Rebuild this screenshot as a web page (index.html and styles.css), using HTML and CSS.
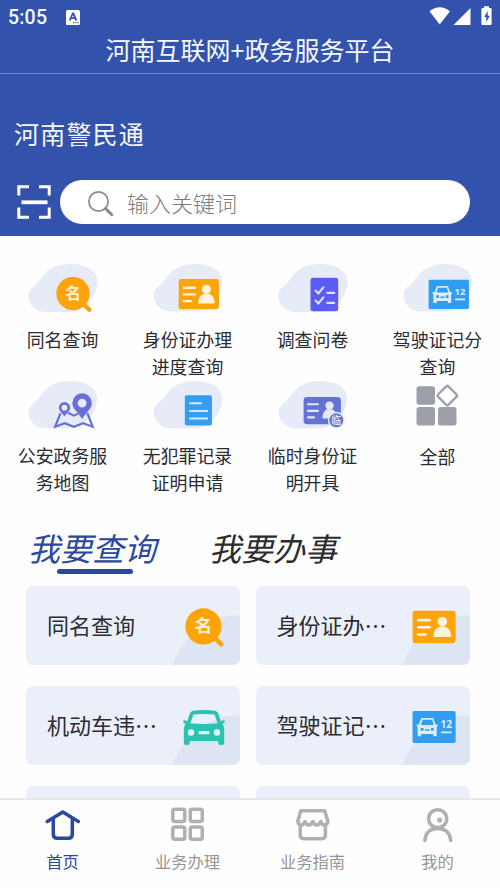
FILE: index.html
```html
<!DOCTYPE html>
<html lang="zh-CN">
<head>
<meta charset="utf-8">
<title>河南警民通</title>
<link rel="stylesheet" href="styles.css">
</head>
<body>
<svg class="sprite" aria-hidden="true">
  <symbol id="blob" viewBox="0 0 70 50">
    <path d="M.3 31C1 25 8 23 14 14 21 4 31 1 42 1c16 0 28 7 27.500 18C69 33 58 49 40 49H17C6 49-.5 39 .3 31z" fill="#e7ebf8"/>
  </symbol>
  <symbol id="name" viewBox="0 0 36 36">
    <circle cx="17" cy="17" r="16.700" fill="#fea40b"/>
    <path d="M27 27l6.300 6.300" stroke="#fea40b" stroke-width="4.400" stroke-linecap="round"/>
    <text x="17" y="22.500" class="glyph-name">名</text>
  </symbol>
  <symbol id="idcard" viewBox="0 0 41 31">
    <rect width="41" height="31" rx="3.500" fill="#fea40b"/>
    <path d="M5.500 9h11M5.500 15.700h11M5.500 22.500h7" stroke="#fff3dc" stroke-width="2.400" stroke-linecap="round"/>
    <circle cx="28.300" cy="10.500" r="4.500" fill="#fff3dc"/>
    <path d="M20 25c0-6 2.500-9 6-10h4.600c3.500 1 6 4 6 10z" fill="#fff3dc"/>
  </symbol>
  <symbol id="licence" viewBox="0 0 41 30">
    <rect width="41" height="30" rx="1.800" fill="#319df2"/>
    <path fill="#d9edff" fill-rule="evenodd" d="M8.500 6.500h11.200l2.100 6 2.200.3v1.300l-1 .6v9h-3.300v-2H8.300v2H5v-9l-1-.6v-1.300l2.200-.3zM9.700 8.200l-1.500 5h12l-1.500-5zM8 16v2.600h2.600V16zm9.600 0v2.600h2.600V16zM12 17.200v1.400h4.200v-1.400z"/>
    <text x="31.900" y="15.600" class="glyph-num">12</text>
    <path d="M27 20h10" stroke="#d9edff" stroke-width="1.700"/>
  </symbol>
  <symbol id="car" viewBox="0 0 42 36">
    <path fill="#2cc2b2" fill-rule="evenodd" d="M10 .8q11-1.600 22 0 2.500.4 3.300 2.700L37.600 11l3.200-.8q1.400.4 1 1.700-.2 1-2.300 1.800 1.700 2.400 1.700 5.300v14q0 2-2 2h-2q-2 0-2-2v-2H6.800v2q0 2-2 2h-2q-2 0-2-2V19q0-2.900 1.700-5.300-2.100-.8-2.300-1.800-.4-1.300 1-1.700l3.200.8 2.300-7.500Q7.500 1.200 10 .8zM10.500 4.500L7.400 13.300q13.600 1.600 27.200 0L31.500 4.500q-10.500-1-21 0z"/>
    <g fill="#e8f5fa"><circle cx="8" cy="22.500" r="3.200"/><circle cx="34" cy="22.500" r="3.200"/><rect x="15.500" y="21" width="11" height="3.200" rx="1.200"/></g>
  </symbol>
</svg>

<header class="header">
  <div class="status">
    <span class="clock">5:05</span>
    <svg class="app-badge" viewBox="0 0 14 15"><rect width="14" height="15" rx="1.500" fill="#fff"/><path d="M3.700 10.500L6.800 3.500h.6l3 7M5 8.200h4" fill="none" stroke="#3252ab" stroke-width="1.800"/><path d="M7 12.700h1.200m1 0h1.200m1 0h1.200" stroke="#3252ab" stroke-width="1.200"/></svg>
    <svg class="signals" viewBox="0 0 64 20"><g fill="#fff"><path d="M.5 5.200Q10.500-2.500 21 5.200L10.700 18.500z"/><path d="M41.500 2v17h-17z"/><path d="M55 .3h5v1.600h1.600q1 0 1 1V18q0 1-1 1h-8.200q-1 0-1-1V2.900q0-1 1-1H55z"/></g><path d="M58.700 5l-3.500 6h2.100v5l3.500-6.300h-2.100z" fill="#3252ab"/></svg>
  </div>
  <h1 class="title">河南互联网+政务服务平台</h1>
  <div class="brand">河南警民通</div>
  <div class="search-row">
    <svg class="scan" viewBox="0 0 34 34" fill="none" stroke="#fff" stroke-width="3"><path d="M1.800 10.500V1.800H12M22 1.800h10.200v8.700M1.800 22.500v9.700H12M22 32.200h10.200v-9.700"/><path d="M4.500 17.300h26" stroke-width="3.800"/></svg>
    <div class="search">
      <svg class="lens" viewBox="0 0 26 26" fill="none" stroke="#8b8b8b" stroke-linecap="round"><circle cx="10.500" cy="10.500" r="9.600" stroke-width="1.700"/><path d="M17.500 17.500l6.300 6.300" stroke-width="3"/></svg>
      <span>输入关键词</span>
    </div>
  </div>
</header>

<main class="main">
  <section class="services">
    <a class="service"><svg class="service-icon" viewBox="0 0 70 50"><use href="#blob"/><use href="#name" x="28" y="13.500" width="36" height="36"/></svg><span>同名查询</span></a>
    <a class="service"><svg class="service-icon" viewBox="0 0 70 50"><use href="#blob"/><use href="#idcard" x="25.300" y="16" width="41" height="31"/></svg><span>身份证办理进度查询</span></a>
    <a class="service"><svg class="service-icon" viewBox="0 0 70 50"><use href="#blob"/><rect x="32.500" y="14.800" width="27.700" height="33.400" rx="2.500" fill="#5b5cf5"/><g fill="none" stroke="#dedffc" stroke-width="2.200"><path d="M37 27l3.400 3.400 5.600-6.800M37 37l3.400 3.400 5.600-6.800"/><path d="M48.500 29.800h8.500M48.500 39.800h8.500"/></g></svg><span>调查问卷</span></a>
    <a class="service"><svg class="service-icon" viewBox="0 0 70 50"><use href="#blob"/><use href="#licence" x="25.300" y="16.700" width="41" height="30"/></svg><span>驾驶证记分查询</span></a>
    <a class="service"><svg class="service-icon" viewBox="0 0 70 50"><use href="#blob"/><path d="M32.500 33.500l-5.500 13.700 9.700-3.500 9.300 3.500 9.300-3.500 9.700 3.500-5.500-14M40 33l6 3 4-2" fill="none" stroke="#6670d8" stroke-width="2.200"/><path fill="#6670d8" fill-rule="evenodd" d="M36.500 22.300a5.700 5.700 0 0 1 5.700 5.700c0 3-2.700 4.500-5.700 8.800-3-4.300-5.700-5.800-5.700-8.800a5.700 5.700 0 0 1 5.700-5.700zm0 2.800a2.900 2.900 0 1 0 0 5.800 2.900 2.900 0 0 0 0-5.800zM54.300 13.500a9.900 9.900 0 0 1 9.900 9.900c0 5.600-5.400 8.200-9.900 16.100-4.500-7.900-9.900-10.500-9.900-16.100a9.900 9.900 0 0 1 9.900-9.900zm0 5.500a4.400 4.400 0 1 0 0 8.800 4.400 4.400 0 0 0 0-8.800z"/></svg><span>公安政务服务地图</span></a>
    <a class="service"><svg class="service-icon" viewBox="0 0 70 50"><use href="#blob"/><rect x="31.800" y="15.500" width="27.400" height="30.500" rx="2" fill="#349df2"/><path d="M36.200 23.500h12.600M36.200 31.200h19M36.200 39h19" stroke="#d2eaff" stroke-width="2"/></svg><span>无犯罪记录证明申请</span></a>
    <a class="service"><svg class="service-icon" viewBox="0 0 70 50"><use href="#blob"/><rect x="25.500" y="17.200" width="37.700" height="27.500" rx="3.500" fill="#6272d7"/><g fill="#e4e8fa"><circle cx="51.700" cy="25.800" r="4.200"/><path d="M44.500 39c0-5.500 2-8.500 5-9.500h4.500c3 1 5 4 5 9.500z"/></g><path d="M30 24.500h10M30 31.200h10M30 37.800h6" stroke="#e4e8fa" stroke-width="2.200" stroke-linecap="round"/><circle cx="58.500" cy="40.600" r="7.800" fill="#6272d7" stroke="#e7ebf8" stroke-width="1.500"/><text x="58.500" y="44.300" class="glyph-temp">临</text></svg><span>临时身份证明开具</span></a>
    <a class="service"><svg class="service-icon" viewBox="0 0 70 50" fill="#9da0a8"><rect x="13.500" y="6.300" width="18.500" height="18.500" rx="2.800"/><rect x="13.500" y="27" width="18.500" height="18.500" rx="2.800"/><rect x="35" y="27" width="18.500" height="18.500" rx="2.800"/><rect x="37" y="8.300" width="14.600" height="14.600" rx="1.500" transform="rotate(45 44.300 15.600)" fill="none" stroke="#9da0a8" stroke-width="2.300"/></svg><span>全部</span></a>
  </section>

  <nav class="tabs">
    <a class="tab tab-active">我要查询</a>
    <a class="tab">我要办事</a>
  </nav>

  <section class="cards">
    <a class="card"><span>同名查询</span><svg class="card-icon" viewBox="0 0 44 42"><use href="#name" x="3" y="2" width="39" height="39"/></svg></a>
    <a class="card"><span>身份证办…</span><svg class="card-icon" viewBox="0 0 44 42"><use href="#idcard" x=".3" y="4.500" width="43.500" height="33"/></svg></a>
    <a class="card"><span>机动车违…</span><svg class="card-icon" viewBox="0 0 44 42"><use href="#car" x="1" y="4" width="42" height="36"/></svg></a>
    <a class="card"><span>驾驶证记…</span><svg class="card-icon" viewBox="0 0 44 42"><use href="#licence" x=".3" y="5" width="43.500" height="32"/></svg></a>
    <a class="card"></a>
    <a class="card"></a>
  </section>
</main>

<footer class="tabbar">
  <a class="tabbar-item tabbar-active"><svg class="tabbar-icon" viewBox="0 0 36 36"><path d="M2.300 14.500L17.800 5l15.500 9.500M8.300 12v15.300q0 4 4 4h11q4 0 4-4V12"/></svg><span>首页</span></a>
  <a class="tabbar-item"><svg class="tabbar-icon" viewBox="0 0 36 36"><rect x="2.800" y="2.300" width="12" height="12.200" rx="2"/><rect x="20.300" y="2.300" width="12" height="12.200" rx="2"/><rect x="2.800" y="20" width="12" height="12.200" rx="2"/><rect x="20.300" y="20" width="12" height="12.200" rx="2"/></svg><span>业务办理</span></a>
  <a class="tabbar-item"><svg class="tabbar-icon" viewBox="0 0 36 36"><path d="M5.800 3.800h24l3 10.500q-.5 3.700-3.500 3.700-2.500 0-3.500-3.500-1.500 3.500-4 3.500t-4-3.500q-1.500 3.500-4 3.500t-4-3.500q-1 3.500-3.500 3.500-3 0-3.500-3.700zM5.200 18v10q0 3.700 3.700 3.700h17.800q3.700 0 3.700-3.700V18"/></svg><span>业务指南</span></a>
  <a class="tabbar-item"><svg class="tabbar-icon" viewBox="0 0 36 36"><circle cx="17.700" cy="11.700" r="9"/><path d="M4.800 33.500Q6 21.500 17.700 21.500T30.800 33.500"/><circle cx="19.700" cy="13" r="2.600" fill="#b0b0b0" stroke="none"/></svg><span>我的</span></a>
</footer>
</body>
</html>
```
FILE: styles.css
```css
* { box-sizing: border-box; }

body {
  margin: 0;
  height: 888px;
  display: flex;
  flex-direction: column;
  overflow: hidden;
  background: #fefefe;
  color: #2b2c30;
  font-family: "Noto Sans CJK SC", sans-serif;
}

.sprite { display: none; }

.glyph-name { font-size: 16px; font-weight: 700; fill: #fff0d2; text-anchor: middle; }
.glyph-num { font: 700 9.500px "Noto Sans", sans-serif; fill: #d9edff; text-anchor: middle; }
.glyph-temp { font-size: 10px; font-weight: 500; fill: #e4e8fa; text-anchor: middle; }

/* Header */
.header { flex: none; height: 236px; background: #3252ab; color: #f5f8ff; }

.status { display: flex; align-items: center; height: 34px; padding: 0 8px; }
.clock { width: 58px; font: 500 19.500px/34px Roboto, sans-serif; letter-spacing: .2px; padding-top: 2px; }
.app-badge { width: 14px; height: 15px; }
.signals { width: 64px; height: 20px; margin: -3px -1px 0 auto; }

.title {
  margin: 0;
  height: 40px;
  border-bottom: 1px solid #6f88cb;
  font-size: 25px;
  font-weight: 400;
  line-height: 31px;
  text-align: center;
}

.brand { margin: 41px 0 0 14px; font-size: 25px; line-height: 36px; letter-spacing: 1.200px; }

.search-row { display: flex; align-items: center; height: 44px; margin-top: 29px; padding: 0 30px 0 17px; }
.scan { width: 34px; height: 34px; margin-right: 9px; }
.search {
  flex: 1;
  display: flex;
  align-items: center;
  gap: 13px;
  height: 44px;
  padding: 0 27px 0 28px;
  border-radius: 22px;
  background: #fff;
  color: #7c7c7c;
  font-size: 22px;
  font-weight: 300;
}
.search span { line-height: 43px; }
.lens { width: 26px; height: 26px; margin-top: 4px; }

/* Service grid */
.main { flex: 1; min-height: 0; overflow: hidden; padding-top: 27px; }

.services { display: grid; grid-template-columns: repeat(4, 125px); grid-auto-rows: 116.500px; }
.service { display: flex; flex-direction: column; align-items: center; }
.service-icon { width: 70px; height: 50px; margin-bottom: 13px; }
.service span { width: 94px; font-size: 17.900px; line-height: 27px; text-align: center; }

/* Section tabs */
.tabs { display: flex; gap: 53px; margin: 29px 0 12px 28px; }
.tab {
  display: flex;
  flex-direction: column;
  align-items: center;
  height: 49px;
  font-size: 32px;
  font-style: italic;
  line-height: 44px;
}
.tab-active { color: #2b489e; }
.tab-active::after { content: ""; width: 76px; height: 5px; margin-left: 6px; border-radius: 3px; background: #2b489e; }

/* Cards */
.cards { display: grid; grid-template-columns: 214px 214px; grid-auto-rows: 79px; gap: 21px 15.500px; padding-left: 26px; }
.card {
  display: flex;
  align-items: center;
  justify-content: space-between;
  padding: 0 14px 0 21px;
  border-radius: 7px;
  overflow: hidden;
  background: radial-gradient(ellipse 70px 81px at 211px 110px, #dde4f3 99%, transparent 100%), #ebeffa;
  font-size: 22px;
}
.card span { padding-bottom: 3px; }
.card-icon { width: 44px; height: 42px; margin-top: 2px; }

/* Bottom bar */
.tabbar {
  flex: none;
  display: flex;
  height: 90px;
  border-top: 2px solid #e5e6ea;
  background: #fefefe;
  color: #969696;
}
.tabbar-item { flex: 1; display: flex; flex-direction: column; align-items: center; padding-top: 7px; font-size: 16.300px; line-height: 24px; }
.tabbar-icon { width: 36px; height: 36px; margin-bottom: 6px; fill: none; stroke: #b0b0b0; stroke-width: 3.500; stroke-linejoin: round; stroke-linecap: round; }
.tabbar-active { color: #2b489e; }
.tabbar-active .tabbar-icon { stroke: #2b489e; }
```
